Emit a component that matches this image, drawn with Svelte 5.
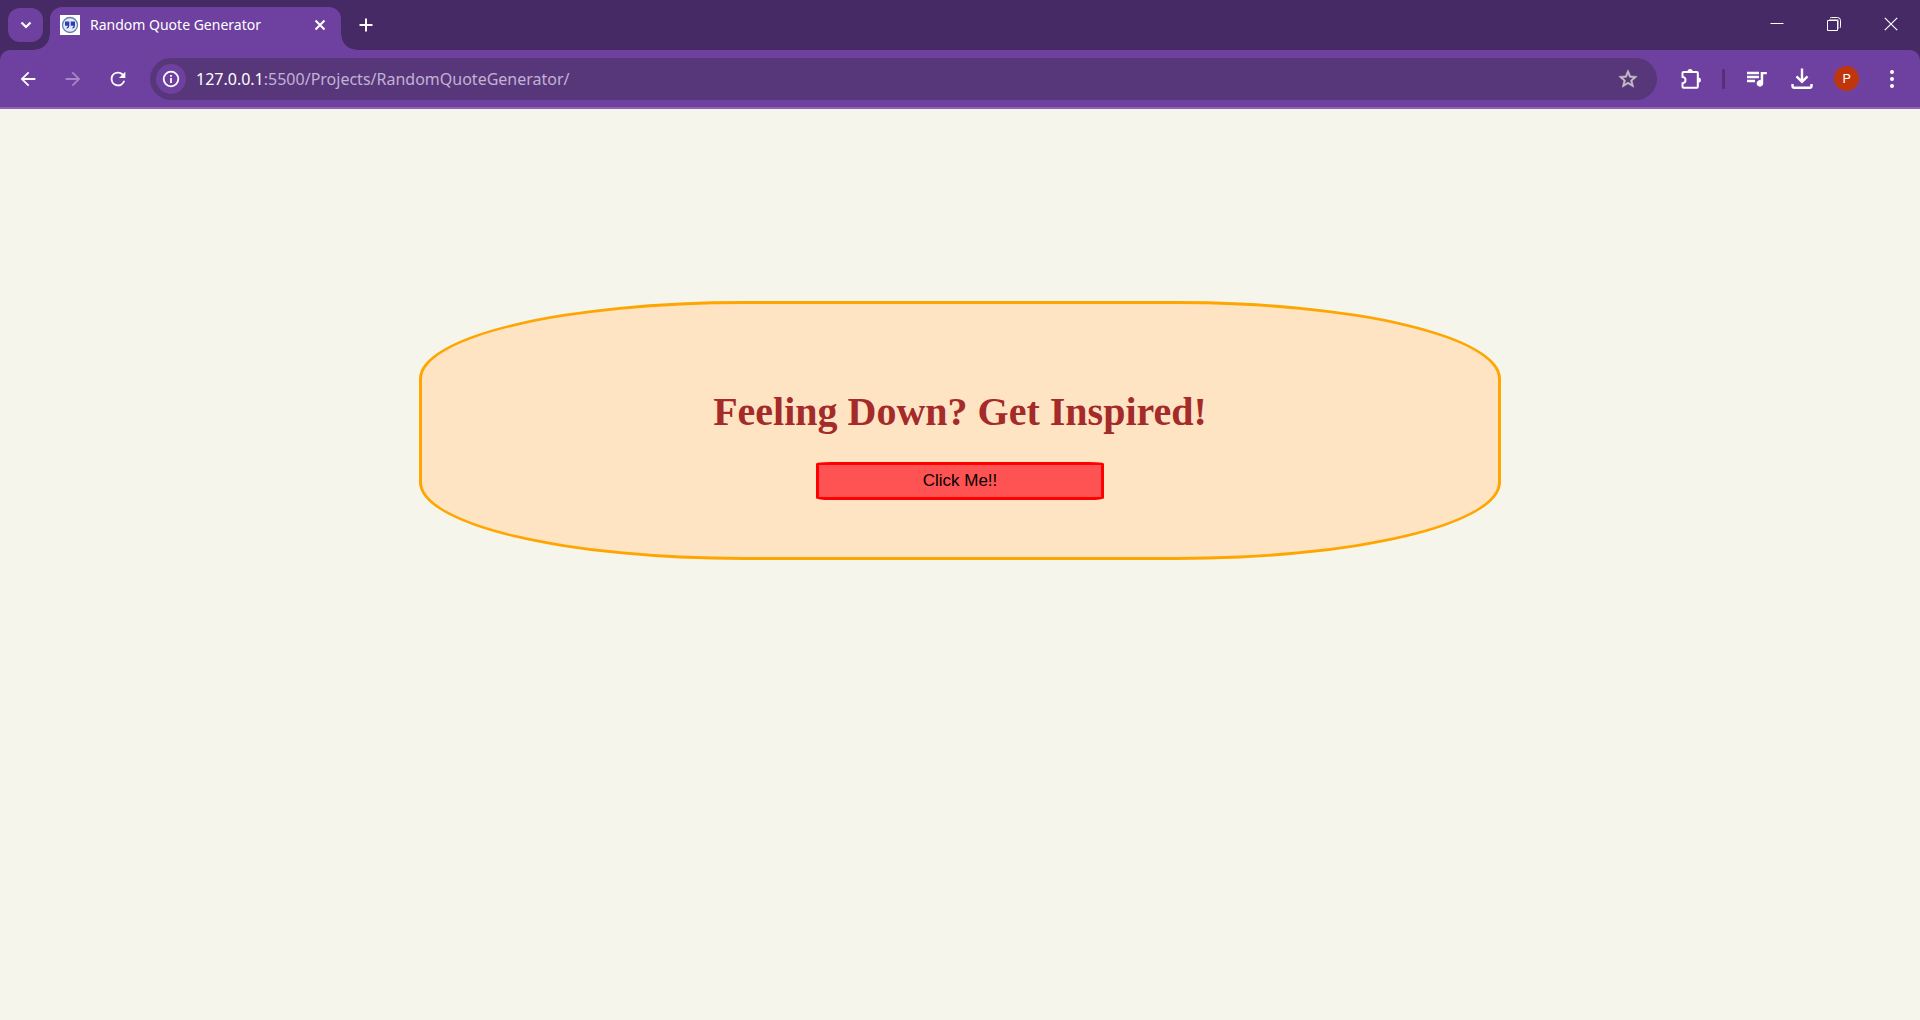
<script>
  const title = 'Random Quote Generator';
  const host = '127.0.0.1';
  const path = ':5500/Projects/RandomQuoteGenerator/';
</script>

<svelte:head>
  <title>Random Quote Generator</title>
</svelte:head>

<div class="browser">
  <header>
    <div class="strip">
      <button class="search-tabs" aria-label="Search tabs">
        <svg class="line" width="12" height="12" viewBox="0 0 12 12"><path d="M1.5 3.5 6 8l4.500-4.500" stroke-width="2.200" /></svg>
      </button>
      <div class="tab">
        <svg class="favicon" width="20" height="20" viewBox="0 0 20 20">
          <rect width="20" height="20" fill="#fff" />
          <circle cx="10" cy="10" r="7.500" fill="#e4eaf9" stroke="#6480b4" stroke-width="1.300" />
          <path d="M5 6.500h4.300v4.200q0 2.400-2.600 3v-1.300q1.200-.5 1.200-1.700H5zM10.700 6.500H15v4.200q0 2.400-2.600 3v-1.300q1.200-.5 1.200-1.700h-2.900z" fill="#2b3fb5" />
        </svg>
        <span class="title">{title}</span>
        <button class="close-tab" aria-label="Close tab">
          <svg class="line" width="12" height="12" viewBox="0 0 12 12"><path d="m1.500 1.500 9 9m0-9-9 9" stroke-width="2" /></svg>
        </button>
      </div>
      <button class="new-tab" aria-label="New tab">
        <svg class="line" width="14" height="14" viewBox="0 0 14 14"><path d="M7 .5v13M.5 7h13" stroke-width="2" /></svg>
      </button>
      <div class="window-controls">
        <button aria-label="Minimize"><svg class="line" width="14" height="14" viewBox="0 0 14 14"><path d="M.5 6.500h13" /></svg></button>
        <button aria-label="Restore">
          <svg class="line" width="14" height="14" viewBox="0 0 14 14"><path d="M.5 3.500h10v10H.5z" /><path d="M3 1q.5-.5 1.500-.5h6q3 0 3 3v6q0 1-.5 1.500" /><path d="M2 2.500h8.500q1 0 1 1V12" opacity=".5" /></svg>
        </button>
        <button aria-label="Close"><svg class="line" width="14" height="14" viewBox="0 0 14 14"><path d="m.8.8 12.400 12.400m0-12.400L.8 13.200" stroke-width="1.200" /></svg></button>
      </div>
    </div>

    <nav class="toolbar" aria-label="Browser toolbar">
      <button class="tool" aria-label="Back"><svg width="22" height="22" viewBox="0 0 24 24"><path d="M20 11H7.830l5.590-5.590L12 4l-8 8 8 8 1.410-1.410L7.830 13H20z" /></svg></button>
      <button class="tool" aria-label="Forward" disabled><svg width="22" height="22" viewBox="0 0 24 24"><path d="m12 4-1.410 1.410L16.170 11H4v2h12.170l-5.580 5.590L12 20l8-8z" /></svg></button>
      <button class="tool" aria-label="Reload"><svg width="22" height="22" viewBox="0 0 24 24"><path d="M17.650 6.350A7.958 7.958 0 0 0 12 4a8 8 0 1 0 7.730 10h-2.080A6 6 0 1 1 12 6c1.660 0 3.140.690 4.220 1.780L13 11h7V4z" /></svg></button>
      <div class="omnibox">
        <button class="site-info" aria-label="Site information">
          <svg width="18" height="18" viewBox="0 0 18 18"><circle cx="9" cy="9" r="7.300" fill="none" stroke="currentColor" stroke-width="1.800" /><path d="M8.100 8h1.800v5H8.100zM8.100 5h1.800v1.800H8.100z" /></svg>
        </button>
        <a class="url" href="#page"><b>{host}</b>{path}</a>
        <button class="star" aria-label="Bookmark this tab">
          <svg width="22" height="22" viewBox="0 0 24 24"><path d="m22 9.240-7.190-.620L12 2 9.190 8.630 2 9.240l5.460 4.730L5.820 21 12 17.270 18.180 21l-1.630-7.030zM12 15.400l-3.760 2.270 1-4.280-3.320-2.880 4.380-.380L12 6.100l1.710 4.040 4.380.380-3.320 2.880 1 4.280z" stroke="currentColor" stroke-width=".6" /></svg>
        </button>
      </div>
      <button class="tool" aria-label="Extensions">
        <svg width="24" height="24" viewBox="0 0 24 24"><path d="M4.500 5h13.300a1 1 0 0 1 1 1v13.800a1 1 0 0 1-1 1H4.500a1 1 0 0 1-1-1v-3.600c4 0 4-6.200 0-6.200V6a1 1 0 0 1 1-1z" fill="none" stroke="currentColor" stroke-width="2" /><path d="M8.500 4.500a2.600 2.600 0 0 1 5.200 0zM19.300 10.400a2.600 2.600 0 0 1 0 5.200z" /></svg>
      </button>
      <span class="divider"></span>
      <button class="tool" aria-label="Media controls"><svg width="24" height="24" viewBox="0 1 24 24"><path d="M14 5.800H2v2.400h12zm0 4H2v2.400h12zM2 16.200h8v-2.400H2zM15.700 6v8.180A3.300 3.300 0 1 0 18.200 17V8.200h3.600V6z" /></svg></button>
      <button class="tool" aria-label="Downloads"><svg class="line" width="24" height="24" viewBox="0 0 24 24"><path d="M12 1.500v13M6.500 9.300l5.500 5.500 5.500-5.500M2.500 17v2q0 1.800 1.800 1.800h15.400q1.800 0 1.800-1.800v-2" stroke-width="2.400" /></svg></button>
      <button class="tool" aria-label="Profile"><span class="avatar">P</span></button>
      <button class="tool" aria-label="Menu"><svg width="24" height="24" viewBox="0 0 24 24"><circle cx="12" cy="5" r="2" /><circle cx="12" cy="12" r="2" /><circle cx="12" cy="19" r="2" /></svg></button>
    </nav>
  </header>

  <main id="page">
    <section class="card">
      <h1>Feeling Down? Get Inspired!</h1>
      <button class="inspire">Click Me!!</button>
    </section>
  </main>
</div>

<style>
  :global(body) {
    margin: 0;
    background: #f5f5eb;
  }
  .browser {
    min-height: 100vh;
    display: flex;
    flex-direction: column;
  }
  header {
    background: #462a65;
    color: #fff;
    font-family: 'Noto Sans', 'Open Sans', sans-serif;
  }
  button {
    border: 0;
    margin: 0;
    padding: 0;
    background: none;
    color: inherit;
    font: inherit;
  }
  header button {
    display: flex;
    align-items: center;
    justify-content: center;
    flex: none;
  }
  svg {
    display: block;
    flex: none;
    fill: currentColor;
  }
  svg.line {
    fill: none;
    stroke: currentColor;
  }
  .strip {
    display: flex;
    height: 50px;
  }
  header .search-tabs {
    width: 35px;
    height: 34px;
    margin: 8px 7px 8px 8px;
    border-radius: 12px;
    background: #6e41a0;
  }
  .tab {
    position: relative;
    box-sizing: border-box;
    display: flex;
    align-items: center;
    width: 291px;
    height: 43px;
    margin-top: 7px;
    padding: 0 15px 7px 10px;
    border-radius: 12px 12px 0 0;
    background: #6e41a0;
  }
  .tab::before,
  .tab::after {
    content: '';
    position: absolute;
    bottom: 0;
    width: 15px;
    height: 15px;
  }
  .tab::before {
    right: 100%;
    background: radial-gradient(circle at 0 0, transparent 14px, #6e41a0 15px);
  }
  .tab::after {
    left: 100%;
    background: radial-gradient(circle at 100% 0, transparent 14px, #6e41a0 15px);
  }
  .title {
    flex: 1;
    margin-left: 10px;
    font-size: 14px;
    line-height: 20px;
    white-space: nowrap;
  }
  header .new-tab {
    width: 32px;
    margin-left: 9px;
  }
  .window-controls {
    display: flex;
    margin-left: auto;
    padding-right: 1px;
  }
  .window-controls button {
    width: 57px;
    height: 48px;
  }
  .toolbar {
    display: flex;
    align-items: center;
    height: 57px;
    padding: 0 6px 0 5px;
    border-bottom: 2px solid #8e63b6;
    border-radius: 10px 10px 0 0;
    background: #6e41a0;
  }
  .tool {
    width: 45px;
    height: 42px;
  }
  .tool:disabled {
    color: #a587c5;
  }
  .omnibox {
    flex: 1;
    min-width: 0;
    display: flex;
    align-items: center;
    height: 42px;
    margin: 0 11px 0 10px;
    border-radius: 21px;
    background: #573779;
  }
  .site-info {
    width: 30px;
    height: 30px;
    margin-left: 6px;
    border-radius: 50%;
    background: #6e41a0;
  }
  .url {
    flex: 1;
    min-width: 0;
    overflow: hidden;
    margin-left: 10px;
    color: #c3b1d6;
    font-size: 16px;
    line-height: 24px;
    text-decoration: none;
    white-space: nowrap;
  }
  .url b {
    color: #fff;
    font-weight: 400;
  }
  .star {
    width: 30px;
    height: 30px;
    margin-right: 14px;
    color: #c4bfc8;
  }
  .divider {
    width: 3px;
    height: 20px;
    margin: 0 9px;
    border-radius: 1px;
    background: #52307a;
  }
  .avatar {
    width: 25px;
    border-radius: 50%;
    background: #bf360c;
    font-family: Roboto, sans-serif;
    font-size: 13px;
    line-height: 25px;
    text-align: center;
  }
  main {
    flex: 1;
    padding-top: 10%;
    background: #f5f5eb;
  }
  .card {
    width: 50%;
    margin: 0 auto;
    padding: 3%;
    border: 3px solid orange;
    border-radius: 30%;
    background: #ffe4c4;
    text-align: center;
  }
  h1 {
    margin: 27px 0;
    color: brown;
    font: bold 40px/46px 'Liberation Serif', 'Times New Roman', serif;
  }
  .inspire {
    width: 30%;
    padding: 6px;
    border: 3px solid red;
    border-radius: 5%;
    background: #ff5252;
    color: #000;
    font: 17px/20px 'Liberation Sans', Arial, sans-serif;
  }
</style>
